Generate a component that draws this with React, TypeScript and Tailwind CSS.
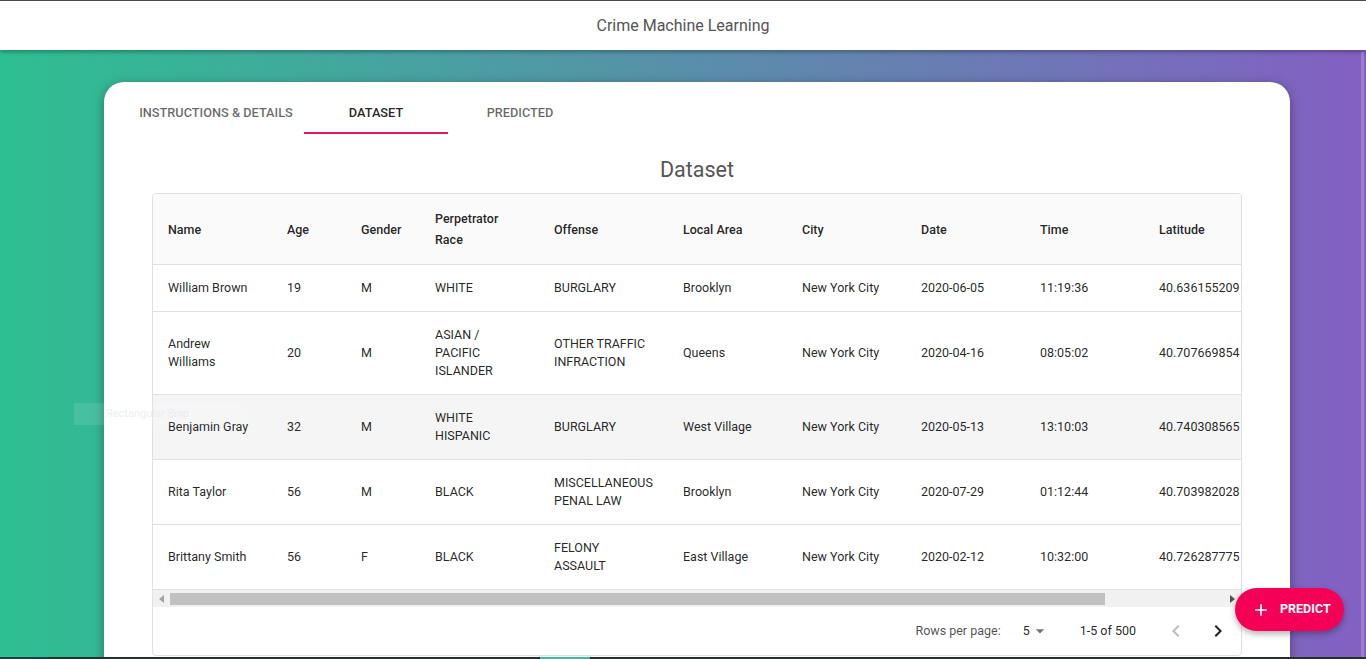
import React from 'react'

type Row = {
  name: string[]
  age: string
  gender: string
  race: string[]
  offense: string[]
  area: string
  city: string
  date: string
  time: string
  lat: string
}

const rows: Row[] = [
  { name: ['William Brown'], age: '19', gender: 'M', race: ['WHITE'], offense: ['BURGLARY'], area: 'Brooklyn', city: 'New York City', date: '2020-06-05', time: '11:19:36', lat: '40.636155209' },
  { name: ['Andrew', 'Williams'], age: '20', gender: 'M', race: ['ASIAN /', 'PACIFIC', 'ISLANDER'], offense: ['OTHER TRAFFIC', 'INFRACTION'], area: 'Queens', city: 'New York City', date: '2020-04-16', time: '08:05:02', lat: '40.707669854' },
  { name: ['Benjamin Gray'], age: '32', gender: 'M', race: ['WHITE', 'HISPANIC'], offense: ['BURGLARY'], area: 'West Village', city: 'New York City', date: '2020-05-13', time: '13:10:03', lat: '40.740308565' },
  { name: ['Rita Taylor'], age: '56', gender: 'M', race: ['BLACK'], offense: ['MISCELLANEOUS', 'PENAL LAW'], area: 'Brooklyn', city: 'New York City', date: '2020-07-29', time: '01:12:44', lat: '40.703982028' },
  { name: ['Brittany Smith'], age: '56', gender: 'F', race: ['BLACK'], offense: ['FELONY', 'ASSAULT'], area: 'East Village', city: 'New York City', date: '2020-02-12', time: '10:32:00', lat: '40.726287775' },
]

const widths = [119, 74, 74, 119, 129, 119, 119, 119, 119, 242]

function Lines({ lines }: { lines: string[] }) {
  return (
    <>
      {lines.map((l, i) => (
        <div key={i}>{l}</div>
      ))}
    </>
  )
}

export default function App() {
  const headers: string[][] = [['Name'], ['Age'], ['Gender'], ['Perpetrator', 'Race'], ['Offense'], ['Local Area'], ['City'], ['Date'], ['Time'], ['Latitude']]

  return (
    <div className="relative flex h-[659px] w-[1366px] flex-col overflow-hidden font-['Roboto',sans-serif]">
      {/* top bar */}
      <header className="relative z-10 flex h-[50px] shrink-0 items-center justify-center border-t border-[#4a4a4a] bg-white shadow-[0_2px_4px_rgba(0,0,0,0.3)]">
        <span className="text-[16px] text-[#555]">Crime Machine Learning</span>
      </header>

      <div className="flex min-h-0 flex-1 bg-[linear-gradient(to_right,#2ebf91,#8360c3)]">
        <main className="min-w-0 flex-1 pt-[32px]">
          <div className="ml-[104px] h-[800px] w-[1186px] rounded-[20px] bg-white pt-[6px] shadow-[0_3px_12px_rgba(0,0,0,0.35)]">
            {/* tabs */}
            <div className="flex pl-[24px] text-[12.75px] font-medium">
              <div className="flex h-[46px] w-[176px] items-center justify-center pt-[4px] text-[rgba(0,0,0,0.6)]">INSTRUCTIONS &amp; DETAILS</div>
              <div className="flex h-[46px] w-[144px] items-center justify-center border-b-2 border-[#e6175c] pt-[6px] text-[rgba(0,0,0,0.87)]">DATASET</div>
              <div className="flex h-[46px] w-[144px] items-center justify-center pt-[4px] text-[rgba(0,0,0,0.6)]">PREDICTED</div>
            </div>

            <h2 className="mt-[24px] h-[24px] text-center text-[21.5px] leading-[24px] text-[#555]">Dataset</h2>

            {/* table card */}
            <div className="mx-[48px] mt-[11px] overflow-hidden rounded-[4px] border border-[#e0e0e0]">
              <div className="overflow-hidden">
                <table className="w-[1233px] table-fixed border-collapse text-left text-[12.5px] text-[rgba(0,0,0,0.87)]">
                  <colgroup>
                    {widths.map((w, i) => (
                      <col key={i} style={{ width: w }} />
                    ))}
                  </colgroup>
                  <thead>
                    <tr className="bg-[#fafafa]">
                      {headers.map((h, i) => (
                        <th key={i} className="border-b border-[#e0e0e0] py-[14px] pl-[15px] align-middle font-medium leading-[21px] whitespace-nowrap">
                          <Lines lines={h} />
                        </th>
                      ))}
                    </tr>
                  </thead>
                  <tbody>
                    {rows.map((r, i) => (
                      <tr key={i} className={i === 2 ? 'bg-[#f5f5f5]' : ''}>
                        {[r.name, [r.age], [r.gender], r.race, r.offense, [r.area], [r.city], [r.date], [r.time], [r.lat]].map((c, j) => (
                          <td key={j} className="border-b border-[#e0e0e0] py-[14px] pl-[15px] align-middle leading-[18px] whitespace-nowrap">
                            <Lines lines={c} />
                          </td>
                        ))}
                      </tr>
                    ))}
                  </tbody>
                </table>
              </div>

              {/* horizontal scrollbar */}
              <div className="flex h-[17px] items-center bg-[#f1f1f1]">
                <div className="flex w-[17px] items-center justify-center">
                  <svg width="6" height="8" viewBox="0 0 6 8"><path d="M5 0v8L0 4z" fill="#a3a3a3" /></svg>
                </div>
                <div className="h-[12px] w-[935px] bg-[#c1c1c1]" />
                <div className="flex-1" />
                <div className="flex w-[17px] items-center justify-center">
                  <svg width="6" height="8" viewBox="0 0 6 8"><path d="M0 0v8l5-4z" fill="#505050" /></svg>
                </div>
              </div>

              {/* pagination */}
              <div className="flex h-[48px] items-center justify-end pr-[2px] text-[12.5px] text-[rgba(0,0,0,0.87)]">
                <span className="text-[rgba(0,0,0,0.7)]">Rows per page:</span>
                <span className="ml-[22px]">5</span>
                <svg width="20" height="20" viewBox="0 0 24 24"><path d="M7 10l5 5 5-5z" fill="rgba(0,0,0,0.54)" /></svg>
                <span className="ml-[30px]">1-5 of 500</span>
                <div className="ml-[19px] flex w-[42px] items-center justify-center">
                  <svg width="24" height="24" viewBox="0 0 24 24"><path d="M15.41 16.59L10.83 12l4.58-4.59L14 6l-6 6 6 6z" fill="rgba(0,0,0,0.26)" /></svg>
                </div>
                <div className="flex w-[42px] items-center justify-center">
                  <svg width="24" height="24" viewBox="0 0 24 24"><path d="M8.59 16.59L13.17 12 8.59 7.41 10 6l6 6-6 6z" fill="rgba(0,0,0,0.87)" /></svg>
                </div>
              </div>
            </div>
          </div>
        </main>

        {/* page scrollbar */}
        <div className="flex w-[8px] shrink-0 justify-center pt-[2px]">
          <div className="h-full w-[3px] bg-white/20" />
        </div>
      </div>

      {/* bottom strip */}
      <div className="flex h-[2px] shrink-0 bg-[#22302f]">
        <div className="w-[48px] bg-[#0e4646]" />
        <div className="ml-[492px] w-[50px] bg-[#3fb8a0]" />
      </div>

      {/* ghost snip tooltip */}
      <div className="absolute left-[74px] top-[403px] flex h-[22px] w-[172px] items-center bg-white/10 pl-[32px] text-[11px] text-[#e4e8ee]/70">
        Rectangular Snip
      </div>

      {/* floating action button */}
      <button className="absolute left-[1235px] top-[588px] flex h-[43px] w-[109px] items-center rounded-full bg-[#f50057] pl-[16px] text-[12.5px] font-bold text-white shadow-[0_3px_6px_rgba(0,0,0,0.3)]">
        <svg width="20" height="20" viewBox="0 0 24 24"><path d="M19 13h-6v6h-2v-6H5v-2h6V5h2v6h6v2z" fill="white" /></svg>
        <span className="ml-[9px]">PREDICT</span>
      </button>
    </div>
  )
}
